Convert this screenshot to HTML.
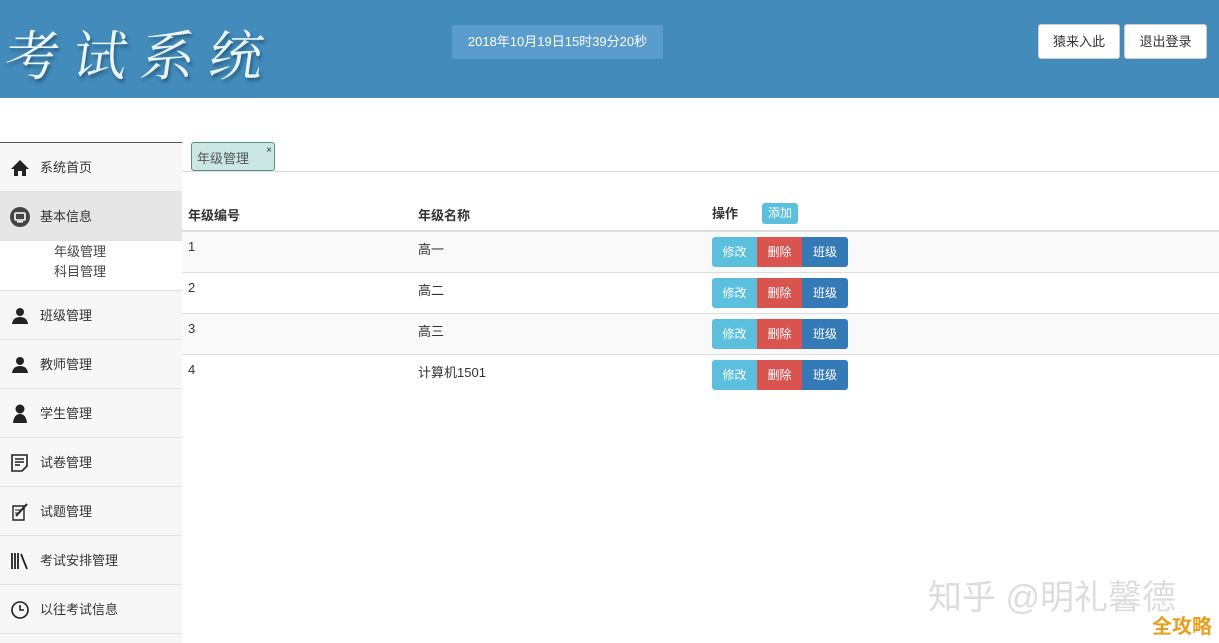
<!DOCTYPE html><html><head><meta charset="utf-8"><style>
body{margin:0;width:1219px;height:641px;overflow:hidden;background:#fff;font-family:"Liberation Sans","Noto Sans CJK SC",sans-serif;font-size:13px;color:#333;position:relative}
.hd{position:absolute;left:0;top:0;width:1219px;height:98px;background:#428bba}
.logo{position:absolute;left:6px;top:14px;font-family:"Noto Serif CJK SC",serif;font-size:54px;color:#eaf6fb;letter-spacing:14px;text-shadow:2px 3px 3px #2a5d80;transform:skewX(-8deg)}
.date{position:absolute;left:452px;top:25px;width:211px;height:34px;background:#5a9ccb;color:#fff;font-size:13px;line-height:34px;text-align:center}
.hb{position:absolute;top:24px;height:33px;background:#fff;border:1px solid #ccc;border-radius:3px;line-height:33px;text-align:center;font-size:13px}
.side{position:absolute;left:0;top:142px;width:182px;height:500px;background:#f7f7f7;border-top:1px solid #555}
.it{height:48px;border-bottom:1px solid #e2e2e2;line-height:50px;padding-left:40px;position:relative;font-size:13px}
.it svg{position:absolute;left:10px;top:15px;width:20px;height:20px}
.sub{background:#fff;height:50px;border-bottom:1px solid #ddd;padding-left:54px;line-height:20px;padding-top:1px;box-sizing:border-box;font-size:13px;color:#444}
.tab{position:absolute;left:191px;top:142px;width:84px;height:29px;background:#cbe7e3;border:1px solid #5b8f80;border-radius:3px;font-size:13px;color:#555;line-height:31px;padding-left:5px;box-sizing:border-box}
.tab b{position:absolute;right:2px;top:-8px;font-size:10px;color:#333;font-weight:normal}
.tl{position:absolute;left:182px;top:171px;width:1037px;border-top:1px solid #ddd}
.th{position:absolute;top:205px;font-weight:bold;font-size:13px}
.row{position:absolute;left:182px;width:1037px;height:40px;border-top:1px solid #ddd}
.row span{position:absolute;top:7px}
.b{position:absolute;top:5px;height:30px;width:45px;color:#fff;line-height:30px;text-align:center;font-size:12px}
</style></head><body>
<div class="hd"><div class="logo">考试系统</div><div class="date">2018年10月19日15时39分20秒</div>
<div class="hb" style="left:1038px;width:80px">猿来入此</div><div class="hb" style="left:1124px;width:81px">退出登录</div></div>
<div class="side">
<div class="it"><svg viewBox="0 0 20 20"><path d="M10 2 L1 11 H4 V18 H8 V13 H12 V18 H16 V11 H19 Z" fill="#222"/></svg>系统首页</div>
<div class="it" style="background:#e6e6e6"><svg viewBox="0 0 20 20"><circle cx="10" cy="10" r="10" fill="#444"/><rect x="5" y="6" width="10" height="7" rx="1" fill="none" stroke="#fff" stroke-width="1.6"/><rect x="7" y="14" width="6" height="1.5" fill="#fff"/></svg>基本信息</div>
<div class="sub">年级管理<br>科目管理</div>
<div class="it"><svg viewBox="0 0 20 20"><circle cx="10" cy="6" r="4" fill="#222"/><path d="M2 18 Q3 11 10 11 Q17 11 18 18 Z" fill="#222"/></svg>班级管理</div>
<div class="it"><svg viewBox="0 0 20 20"><circle cx="10" cy="6" r="4" fill="#222"/><path d="M2 18 Q3 11 10 11 Q17 11 18 18 Z" fill="#222"/></svg>教师管理</div>
<div class="it"><svg viewBox="0 0 20 20"><circle cx="10" cy="5" r="4.5" fill="#222"/><path d="M3 19 Q4 10 10 10 Q16 10 17 19 Z" fill="#222"/></svg>学生管理</div>
<div class="it"><svg viewBox="0 0 20 20"><path d="M2 2 H17 V13 L12 18 H2 Z" fill="none" stroke="#222" stroke-width="1.6"/><path d="M5 6 H14 M5 9 H14 M5 12 H10" stroke="#222" stroke-width="1.4"/></svg>试卷管理</div>
<div class="it"><svg viewBox="0 0 20 20"><path d="M3 4 H14 V18 H3 Z" fill="none" stroke="#222" stroke-width="1.4"/><path d="M6 14 L17 2" stroke="#222" stroke-width="2"/><path d="M5 8 H11 M5 11 H10" stroke="#222"/></svg>试题管理</div>
<div class="it"><svg viewBox="0 0 20 20"><path d="M2 2 V18 M5 2 V18 M8 2 V18 M11 3 L17 18" stroke="#222" stroke-width="1.8" fill="none"/></svg>考试安排管理</div>
<div class="it"><svg viewBox="0 0 20 20"><circle cx="10" cy="10" r="8" fill="none" stroke="#222" stroke-width="1.6"/><path d="M10 5 V10 H14" stroke="#222" stroke-width="1.6" fill="none"/></svg>以往考试信息</div>
</div>
<div class="tab">年级管理<b>×</b></div>
<div class="tl"></div>
<div class="th" style="left:188px">年级编号</div><div class="th" style="left:418px">年级名称</div><div class="th" style="left:712px;top:203px">操作</div>
<div style="position:absolute;left:762px;top:203px;width:36px;height:21px;background:#5bc0de;color:#fff;font-size:12px;line-height:21px;text-align:center;border-radius:3px">添加</div>
<div class="row" style="top:230px;background:#f9f9f9;border-top:2px solid #ddd"><span style="left:6px">1</span><span style="left:236px">高一</span><div class="b" style="left:530px;background:#5bc0de;border-radius:3px 0 0 3px">修改</div><div class="b" style="left:575px;background:#d9534f">删除</div><div class="b" style="left:620px;width:46px;background:#337ab7;border-radius:0 3px 3px 0">班级</div></div>
<div class="row" style="top:272px"><span style="left:6px">2</span><span style="left:236px">高二</span><div class="b" style="left:530px;background:#5bc0de;border-radius:3px 0 0 3px">修改</div><div class="b" style="left:575px;background:#d9534f">删除</div><div class="b" style="left:620px;width:46px;background:#337ab7;border-radius:0 3px 3px 0">班级</div></div>
<div class="row" style="top:313px;background:#f9f9f9"><span style="left:6px">3</span><span style="left:236px">高三</span><div class="b" style="left:530px;background:#5bc0de;border-radius:3px 0 0 3px">修改</div><div class="b" style="left:575px;background:#d9534f">删除</div><div class="b" style="left:620px;width:46px;background:#337ab7;border-radius:0 3px 3px 0">班级</div></div>
<div class="row" style="top:354px"><span style="left:6px">4</span><span style="left:236px">计算机1501</span><div class="b" style="left:530px;background:#5bc0de;border-radius:3px 0 0 3px">修改</div><div class="b" style="left:575px;background:#d9534f">删除</div><div class="b" style="left:620px;width:46px;background:#337ab7;border-radius:0 3px 3px 0">班级</div></div>
<div style="position:absolute;left:928px;top:570px;font-size:34px;color:#ddd">知乎 @明礼馨德</div>
<div style="position:absolute;left:1152px;top:610px;font-size:20px;color:#e8a020;font-weight:bold">全攻略</div>
</body></html>
